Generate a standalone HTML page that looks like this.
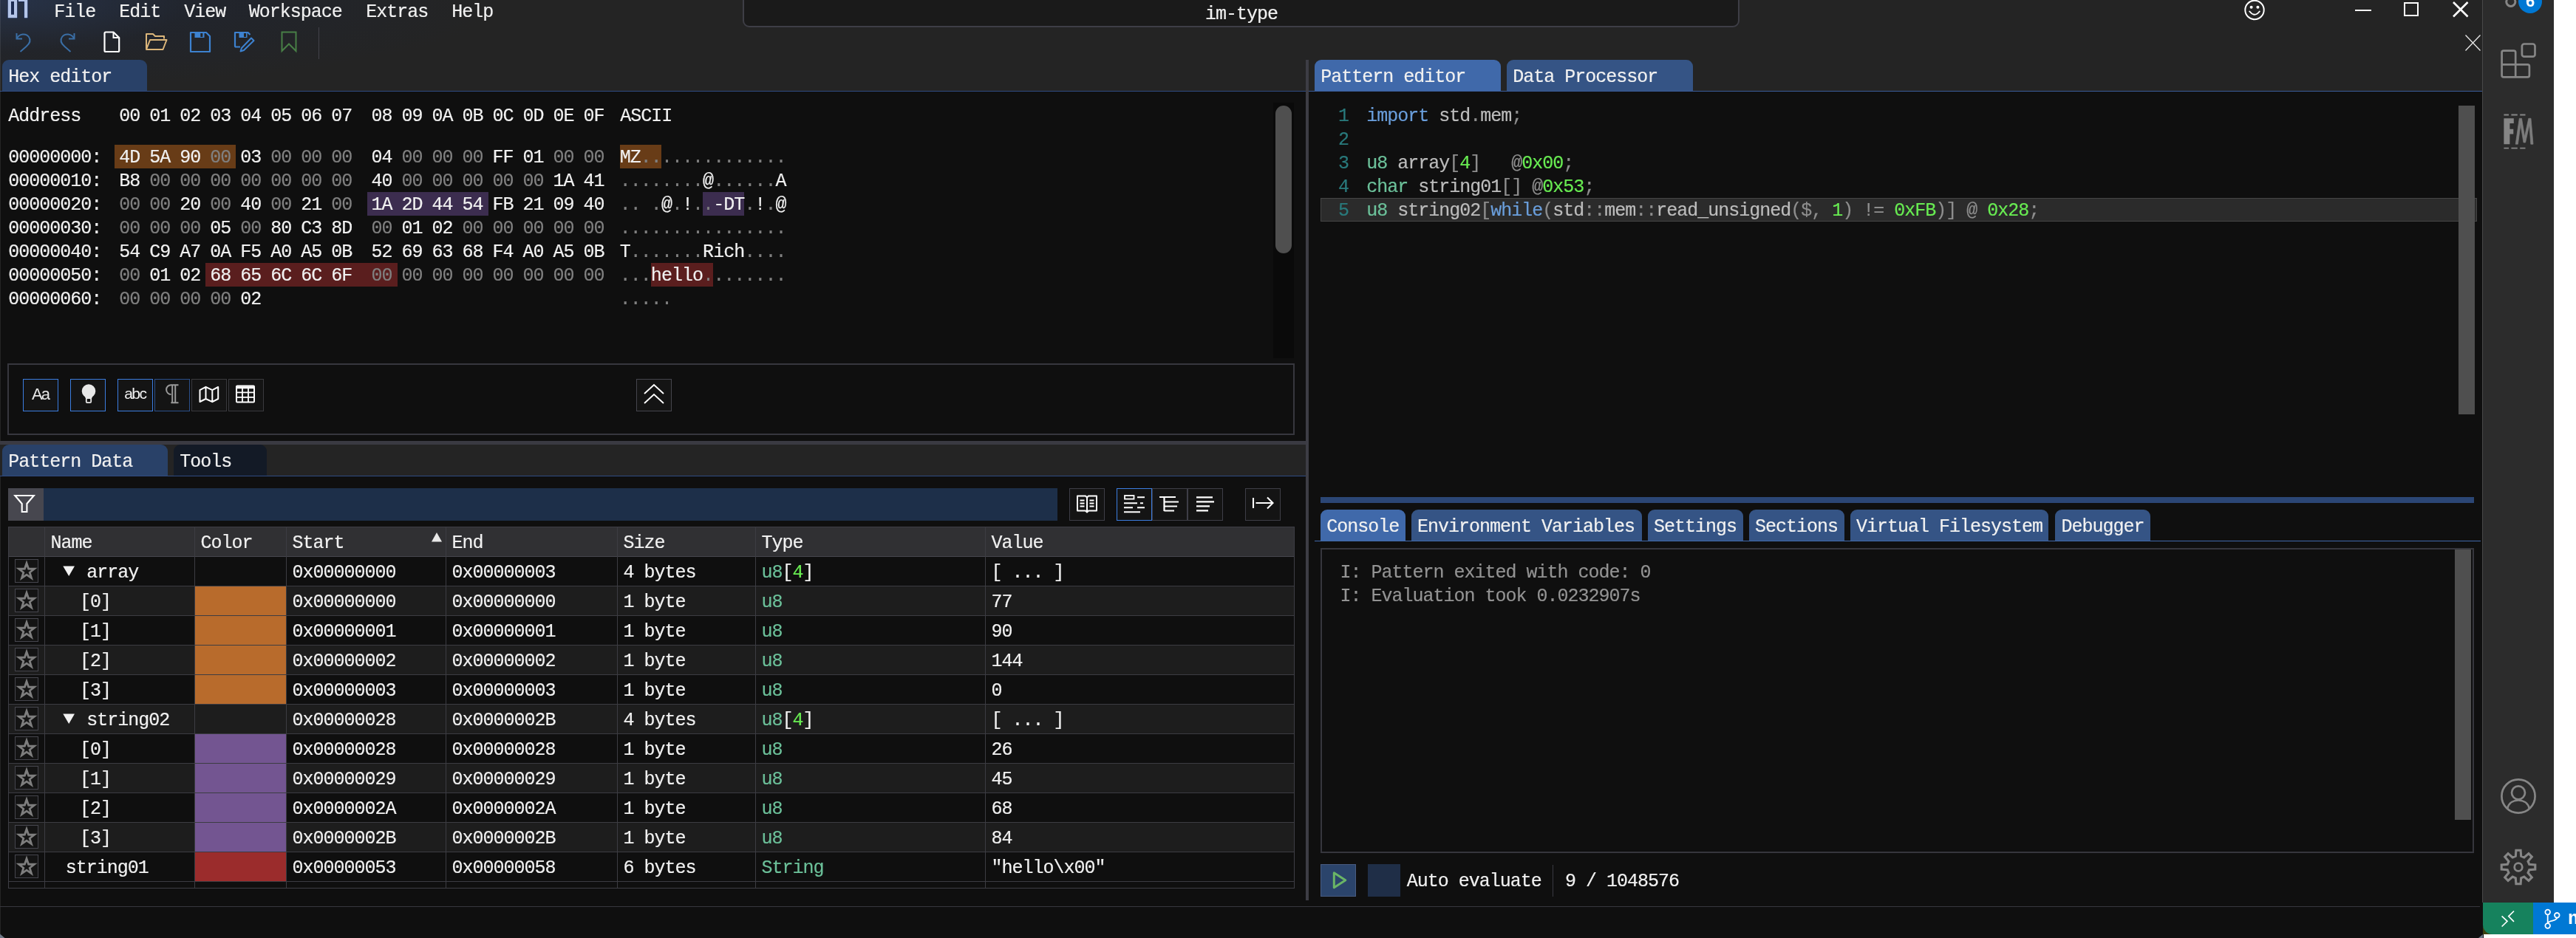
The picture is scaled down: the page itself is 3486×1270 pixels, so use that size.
<!DOCTYPE html>
<html><head><meta charset="utf-8"><title>im-type</title><style>
html,body{margin:0;padding:0;background:#0f0f0f;}
body{width:3486px;height:1270px;position:relative;overflow:hidden;font-family:"Liberation Mono",monospace;font-size:25.0px;letter-spacing:-1.004px;color:#f1f1f1;}
div,svg,span.t,span.s{position:absolute;}
#L{left:0;top:0;width:3486px;height:1270px;will-change:transform;}
span.t{white-space:pre;line-height:32px;height:32px;-webkit-text-stroke:0.18px currentColor;}
span.t span{-webkit-text-stroke:0.18px currentColor;}
span.s{white-space:pre;font-family:"Liberation Sans",sans-serif;letter-spacing:0;line-height:1.15;}
svg{overflow:visible;}
</style></head><body><div id="L">
<div style="left:0.00px;top:0.00px;width:3359.50px;height:1270.00px;background:#0f0f0f;"></div>
<div style="left:0.00px;top:0.00px;width:3359.50px;height:123.00px;background:#242424;"></div>
<div style="left:0.00px;top:0.00px;width:1000.00px;height:123.00px;background:radial-gradient(ellipse 260px 70px at 0 0, rgba(70,100,150,0.22), rgba(70,100,150,0) 100%),radial-gradient(ellipse 680px 120px at 0 0, rgba(22,40,80,0.34), rgba(22,40,80,0.14) 55%, rgba(36,36,36,0) 100%);"></div>
<div style="left:3.00px;top:81.00px;width:196.00px;height:42.00px;background:#294168;border-radius:9px 9px 0 0;"></div>
<div style="left:0.00px;top:123.10px;width:1767.00px;height:1.00px;background:#2f4b82;"></div>
<span class="t" style="left:11.30px;top:88.85px;">Hex editor</span>
<div style="left:1778.50px;top:81.40px;width:252.50px;height:41.60px;background:#4069aa;border-radius:9px 9px 0 0;"></div>
<div style="left:2038.70px;top:81.40px;width:252.50px;height:41.60px;background:#355485;border-radius:9px 9px 0 0;"></div>
<div style="left:1771.00px;top:123.00px;width:1588.50px;height:1.00px;background:#3a5c9a;"></div>
<span class="t" style="left:1787.30px;top:88.85px;">Pattern editor</span>
<span class="t" style="left:2047.30px;top:88.85px;">Data Processor</span>
<div style="left:1766.80px;top:81.00px;width:4.20px;height:1138.00px;background:#3d3d45;"></div>
<div style="left:0.00px;top:0.00px;width:1.00px;height:1270.00px;background:rgba(255,255,255,0.09);"></div>
<span class="t" style="left:73.30px;top:1.35px;">File</span>
<span class="t" style="left:161.30px;top:1.35px;">Edit</span>
<span class="t" style="left:249.30px;top:1.35px;">View</span>
<span class="t" style="left:336.80px;top:1.35px;">Workspace</span>
<span class="t" style="left:495.30px;top:1.35px;">Extras</span>
<span class="t" style="left:611.30px;top:1.35px;">Help</span>
<svg style="left:9.00px;top:0.00px;" width="30" height="26" viewBox="0 0 30 26"><path d="M1.7 0 H14.2 V24.2 H1.7 Z" fill="#1a2a50" stroke="#15254a" stroke-width="1.6"/><path d="M15.9 0 H28.3 V24.2 H23.9 V2.1 H15.9 Z" fill="none" stroke="#15254a" stroke-width="1.8"/><path d="M1.7 -1 H14.2 V24.2 H1.7 Z M6 2.1 V19.7 H10 V2.1 Z" fill="#b4c5e8" fill-rule="evenodd"/><path d="M15.9 -1 H28.3 V24.2 H23.9 V2.1 H15.9 Z" fill="#b4c5e8"/></svg>
<div style="left:1005.20px;top:-10.00px;width:1348.60px;height:46.60px;background:#1a1a1a;border:2px solid #3e3e46;border-radius:9px;box-sizing:border-box;"></div>
<span class="t" style="left:1631.10px;top:3.65px;">im-type</span>
<svg style="left:3036.00px;top:-1.00px;" width="30" height="30" viewBox="0 0 30 30"><circle cx="15" cy="14.5" r="12.7" fill="none" stroke="#fff" stroke-width="2"/><circle cx="10.6" cy="10.8" r="2" fill="#fff"/><circle cx="19.4" cy="10.8" r="2" fill="#fff"/><path d="M8.3 16.5 Q15 25 21.7 16.5" fill="none" stroke="#fff" stroke-width="2" stroke-linecap="round"/></svg>
<div style="left:3187.00px;top:13.00px;width:22.00px;height:2.20px;background:#fff;"></div>
<div style="left:3253.00px;top:2.80px;width:20.00px;height:19.70px;border:2.2px solid #fff;box-sizing:border-box;"></div>
<svg style="left:3318.00px;top:1.20px;" width="24" height="24" viewBox="0 0 24 24"><path d="M2 2 L21.5 21.5 M21.5 2 L2 21.5" stroke="#fff" stroke-width="2.6"/></svg>
<svg style="left:3335.00px;top:46.00px;" width="24" height="24" viewBox="0 0 24 24"><path d="M1.5 1.5 L21.5 22.5 M21.5 1.5 L1.5 22.5" stroke="#e8e8e8" stroke-width="1.3"/></svg>
<svg style="left:20.00px;top:43.00px;" width="24" height="30" viewBox="0 0 24 30"><path d="M2.5 2 V9.5 H10" fill="none" stroke="#3a6ea5" stroke-width="2"/><path d="M2.8 9.2 C6 2.5 15 1.5 19 7 C22.5 12 19 17 15.5 20 L7.5 27" fill="none" stroke="#3a6ea5" stroke-width="2"/></svg>
<svg style="left:79.00px;top:43.00px;" width="24" height="30" viewBox="0 0 24 30"><path d="M21.5 2 V9.5 H14" fill="none" stroke="#3a6ea5" stroke-width="2"/><path d="M21.2 9.2 C18 2.5 9 1.5 5 7 C1.5 12 5 17 8.5 20 L16.5 27" fill="none" stroke="#3a6ea5" stroke-width="2"/></svg>
<svg style="left:140.00px;top:42.00px;" width="24" height="30" viewBox="0 0 24 30"><path d="M3 1.5 H13.5 L21.2 9 V26.5 Q21.2 28 19.7 28 H3 Q1.5 28 1.5 26.5 V3 Q1.5 1.5 3 1.5 Z" fill="none" stroke="#fff" stroke-width="2.2" stroke-linejoin="round"/><path d="M13.5 1.5 V9 H21.2" fill="none" stroke="#fff" stroke-width="2"/></svg>
<svg style="left:196.00px;top:44.00px;" width="32" height="26" viewBox="0 0 32 26"><path d="M26 8.5 V5 H14 L11 2 H2 V22" fill="none" stroke="#dcb67a" stroke-width="2" stroke-linejoin="round"/><path d="M2 23 L7 10 H29.5 L24.5 23 Z" fill="none" stroke="#dcb67a" stroke-width="2" stroke-linejoin="round"/></svg>
<svg style="left:256.00px;top:42.00px;" width="30" height="30" viewBox="0 0 30 30"><path d="M2 2 H23 L28 7 V28 H2 Z" fill="none" stroke="#3d82d0" stroke-width="2.2" stroke-linejoin="round"/><rect x="7.5" y="2" width="13" height="7" fill="#3d82d0"/><rect x="15.3" y="3" width="3" height="5" fill="#242424"/></svg>
<svg style="left:316.00px;top:42.00px;" width="30" height="30" viewBox="0 0 30 30"><path d="M9 21.5 H3.5 Q2 21.5 2 20 V2 H19.5 L22.5 5" fill="none" stroke="#3d82d0" stroke-width="2.2" stroke-linejoin="round"/><rect x="7.5" y="2" width="11" height="7" fill="#3d82d0"/><rect x="14" y="3" width="3" height="5" fill="#242424"/><path d="M24 9.5 L27.5 13 L14 26 L9.5 27.5 L11 23 Z" fill="none" stroke="#3d82d0" stroke-width="2" stroke-linejoin="round"/></svg>
<svg style="left:380.00px;top:42.00px;" width="22" height="30" viewBox="0 0 22 30"><path d="M1.5 1.5 H20.5 V27 L11 17.5 L1.5 27 Z" fill="none" stroke="#487f46" stroke-width="2"/></svg>
<div style="left:430.80px;top:37.00px;width:1.50px;height:43.00px;background:#43434b;"></div>
<span class="t" style="left:11.30px;top:142.35px;">Address</span>
<span class="t" style="left:161.30px;top:142.35px;">00</span>
<span class="t" style="left:202.30px;top:142.35px;">01</span>
<span class="t" style="left:243.30px;top:142.35px;">02</span>
<span class="t" style="left:284.30px;top:142.35px;">03</span>
<span class="t" style="left:325.30px;top:142.35px;">04</span>
<span class="t" style="left:366.30px;top:142.35px;">05</span>
<span class="t" style="left:407.30px;top:142.35px;">06</span>
<span class="t" style="left:448.30px;top:142.35px;">07</span>
<span class="t" style="left:502.60px;top:142.35px;">08</span>
<span class="t" style="left:543.60px;top:142.35px;">09</span>
<span class="t" style="left:584.60px;top:142.35px;">0A</span>
<span class="t" style="left:625.60px;top:142.35px;">0B</span>
<span class="t" style="left:666.60px;top:142.35px;">0C</span>
<span class="t" style="left:707.60px;top:142.35px;">0D</span>
<span class="t" style="left:748.60px;top:142.35px;">0E</span>
<span class="t" style="left:789.60px;top:142.35px;">0F</span>
<span class="t" style="left:839.30px;top:142.35px;">ASCII</span>
<div style="left:155.00px;top:196.00px;width:164.00px;height:32.00px;background:#683c17;"></div>
<div style="left:838.80px;top:196.00px;width:56.20px;height:32.00px;background:#683c17;"></div>
<span class="t" style="left:11.30px;top:198.35px;">00000000:</span>
<span class="t" style="left:161.30px;top:198.35px;">4D</span>
<span class="t" style="left:202.30px;top:198.35px;">5A</span>
<span class="t" style="left:243.30px;top:198.35px;">90</span>
<span class="t" style="left:284.30px;top:198.35px;color:#808080;">00</span>
<span class="t" style="left:325.30px;top:198.35px;">03</span>
<span class="t" style="left:366.30px;top:198.35px;color:#808080;">00</span>
<span class="t" style="left:407.30px;top:198.35px;color:#808080;">00</span>
<span class="t" style="left:448.30px;top:198.35px;color:#808080;">00</span>
<span class="t" style="left:502.60px;top:198.35px;">04</span>
<span class="t" style="left:543.60px;top:198.35px;color:#808080;">00</span>
<span class="t" style="left:584.60px;top:198.35px;color:#808080;">00</span>
<span class="t" style="left:625.60px;top:198.35px;color:#808080;">00</span>
<span class="t" style="left:666.60px;top:198.35px;">FF</span>
<span class="t" style="left:707.60px;top:198.35px;">01</span>
<span class="t" style="left:748.60px;top:198.35px;color:#808080;">00</span>
<span class="t" style="left:789.60px;top:198.35px;color:#808080;">00</span>
<span class="t" style="left:838.70px;top:198.35px;">M</span>
<span class="t" style="left:852.75px;top:198.35px;">Z</span>
<span class="t" style="left:866.80px;top:198.35px;color:#808080;">.</span>
<span class="t" style="left:880.85px;top:198.35px;color:#808080;">.</span>
<span class="t" style="left:894.90px;top:198.35px;color:#808080;">.</span>
<span class="t" style="left:908.95px;top:198.35px;color:#808080;">.</span>
<span class="t" style="left:923.00px;top:198.35px;color:#808080;">.</span>
<span class="t" style="left:937.05px;top:198.35px;color:#808080;">.</span>
<span class="t" style="left:951.10px;top:198.35px;color:#808080;">.</span>
<span class="t" style="left:965.15px;top:198.35px;color:#808080;">.</span>
<span class="t" style="left:979.20px;top:198.35px;color:#808080;">.</span>
<span class="t" style="left:993.25px;top:198.35px;color:#808080;">.</span>
<span class="t" style="left:1007.30px;top:198.35px;color:#808080;">.</span>
<span class="t" style="left:1021.35px;top:198.35px;color:#808080;">.</span>
<span class="t" style="left:1035.40px;top:198.35px;color:#808080;">.</span>
<span class="t" style="left:1049.45px;top:198.35px;color:#808080;">.</span>
<span class="t" style="left:11.30px;top:230.35px;">00000010:</span>
<span class="t" style="left:161.30px;top:230.35px;">B8</span>
<span class="t" style="left:202.30px;top:230.35px;color:#808080;">00</span>
<span class="t" style="left:243.30px;top:230.35px;color:#808080;">00</span>
<span class="t" style="left:284.30px;top:230.35px;color:#808080;">00</span>
<span class="t" style="left:325.30px;top:230.35px;color:#808080;">00</span>
<span class="t" style="left:366.30px;top:230.35px;color:#808080;">00</span>
<span class="t" style="left:407.30px;top:230.35px;color:#808080;">00</span>
<span class="t" style="left:448.30px;top:230.35px;color:#808080;">00</span>
<span class="t" style="left:502.60px;top:230.35px;">40</span>
<span class="t" style="left:543.60px;top:230.35px;color:#808080;">00</span>
<span class="t" style="left:584.60px;top:230.35px;color:#808080;">00</span>
<span class="t" style="left:625.60px;top:230.35px;color:#808080;">00</span>
<span class="t" style="left:666.60px;top:230.35px;color:#808080;">00</span>
<span class="t" style="left:707.60px;top:230.35px;color:#808080;">00</span>
<span class="t" style="left:748.60px;top:230.35px;">1A</span>
<span class="t" style="left:789.60px;top:230.35px;">41</span>
<span class="t" style="left:838.70px;top:230.35px;color:#808080;">.</span>
<span class="t" style="left:852.75px;top:230.35px;color:#808080;">.</span>
<span class="t" style="left:866.80px;top:230.35px;color:#808080;">.</span>
<span class="t" style="left:880.85px;top:230.35px;color:#808080;">.</span>
<span class="t" style="left:894.90px;top:230.35px;color:#808080;">.</span>
<span class="t" style="left:908.95px;top:230.35px;color:#808080;">.</span>
<span class="t" style="left:923.00px;top:230.35px;color:#808080;">.</span>
<span class="t" style="left:937.05px;top:230.35px;color:#808080;">.</span>
<span class="t" style="left:951.10px;top:230.35px;">@</span>
<span class="t" style="left:965.15px;top:230.35px;color:#808080;">.</span>
<span class="t" style="left:979.20px;top:230.35px;color:#808080;">.</span>
<span class="t" style="left:993.25px;top:230.35px;color:#808080;">.</span>
<span class="t" style="left:1007.30px;top:230.35px;color:#808080;">.</span>
<span class="t" style="left:1021.35px;top:230.35px;color:#808080;">.</span>
<span class="t" style="left:1035.40px;top:230.35px;color:#808080;">.</span>
<span class="t" style="left:1049.45px;top:230.35px;">A</span>
<div style="left:496.50px;top:260.00px;width:164.00px;height:32.00px;background:#3c2d4f;"></div>
<div style="left:951.20px;top:260.00px;width:56.20px;height:32.00px;background:#3c2d4f;"></div>
<span class="t" style="left:11.30px;top:262.35px;">00000020:</span>
<span class="t" style="left:161.30px;top:262.35px;color:#808080;">00</span>
<span class="t" style="left:202.30px;top:262.35px;color:#808080;">00</span>
<span class="t" style="left:243.30px;top:262.35px;">20</span>
<span class="t" style="left:284.30px;top:262.35px;color:#808080;">00</span>
<span class="t" style="left:325.30px;top:262.35px;">40</span>
<span class="t" style="left:366.30px;top:262.35px;color:#808080;">00</span>
<span class="t" style="left:407.30px;top:262.35px;">21</span>
<span class="t" style="left:448.30px;top:262.35px;color:#808080;">00</span>
<span class="t" style="left:502.60px;top:262.35px;">1A</span>
<span class="t" style="left:543.60px;top:262.35px;">2D</span>
<span class="t" style="left:584.60px;top:262.35px;">44</span>
<span class="t" style="left:625.60px;top:262.35px;">54</span>
<span class="t" style="left:666.60px;top:262.35px;">FB</span>
<span class="t" style="left:707.60px;top:262.35px;">21</span>
<span class="t" style="left:748.60px;top:262.35px;">09</span>
<span class="t" style="left:789.60px;top:262.35px;">40</span>
<span class="t" style="left:838.70px;top:262.35px;color:#808080;">.</span>
<span class="t" style="left:852.75px;top:262.35px;color:#808080;">.</span>
<span class="t" style="left:880.85px;top:262.35px;color:#808080;">.</span>
<span class="t" style="left:894.90px;top:262.35px;">@</span>
<span class="t" style="left:908.95px;top:262.35px;color:#808080;">.</span>
<span class="t" style="left:923.00px;top:262.35px;">!</span>
<span class="t" style="left:937.05px;top:262.35px;color:#808080;">.</span>
<span class="t" style="left:951.10px;top:262.35px;color:#808080;">.</span>
<span class="t" style="left:965.15px;top:262.35px;">-</span>
<span class="t" style="left:979.20px;top:262.35px;">D</span>
<span class="t" style="left:993.25px;top:262.35px;">T</span>
<span class="t" style="left:1007.30px;top:262.35px;color:#808080;">.</span>
<span class="t" style="left:1021.35px;top:262.35px;">!</span>
<span class="t" style="left:1035.40px;top:262.35px;color:#808080;">.</span>
<span class="t" style="left:1049.45px;top:262.35px;">@</span>
<span class="t" style="left:11.30px;top:294.35px;">00000030:</span>
<span class="t" style="left:161.30px;top:294.35px;color:#808080;">00</span>
<span class="t" style="left:202.30px;top:294.35px;color:#808080;">00</span>
<span class="t" style="left:243.30px;top:294.35px;color:#808080;">00</span>
<span class="t" style="left:284.30px;top:294.35px;">05</span>
<span class="t" style="left:325.30px;top:294.35px;color:#808080;">00</span>
<span class="t" style="left:366.30px;top:294.35px;">80</span>
<span class="t" style="left:407.30px;top:294.35px;">C3</span>
<span class="t" style="left:448.30px;top:294.35px;">8D</span>
<span class="t" style="left:502.60px;top:294.35px;color:#808080;">00</span>
<span class="t" style="left:543.60px;top:294.35px;">01</span>
<span class="t" style="left:584.60px;top:294.35px;">02</span>
<span class="t" style="left:625.60px;top:294.35px;color:#808080;">00</span>
<span class="t" style="left:666.60px;top:294.35px;color:#808080;">00</span>
<span class="t" style="left:707.60px;top:294.35px;color:#808080;">00</span>
<span class="t" style="left:748.60px;top:294.35px;color:#808080;">00</span>
<span class="t" style="left:789.60px;top:294.35px;color:#808080;">00</span>
<span class="t" style="left:838.70px;top:294.35px;color:#808080;">.</span>
<span class="t" style="left:852.75px;top:294.35px;color:#808080;">.</span>
<span class="t" style="left:866.80px;top:294.35px;color:#808080;">.</span>
<span class="t" style="left:880.85px;top:294.35px;color:#808080;">.</span>
<span class="t" style="left:894.90px;top:294.35px;color:#808080;">.</span>
<span class="t" style="left:908.95px;top:294.35px;color:#808080;">.</span>
<span class="t" style="left:923.00px;top:294.35px;color:#808080;">.</span>
<span class="t" style="left:937.05px;top:294.35px;color:#808080;">.</span>
<span class="t" style="left:951.10px;top:294.35px;color:#808080;">.</span>
<span class="t" style="left:965.15px;top:294.35px;color:#808080;">.</span>
<span class="t" style="left:979.20px;top:294.35px;color:#808080;">.</span>
<span class="t" style="left:993.25px;top:294.35px;color:#808080;">.</span>
<span class="t" style="left:1007.30px;top:294.35px;color:#808080;">.</span>
<span class="t" style="left:1021.35px;top:294.35px;color:#808080;">.</span>
<span class="t" style="left:1035.40px;top:294.35px;color:#808080;">.</span>
<span class="t" style="left:1049.45px;top:294.35px;color:#808080;">.</span>
<span class="t" style="left:11.30px;top:326.35px;">00000040:</span>
<span class="t" style="left:161.30px;top:326.35px;">54</span>
<span class="t" style="left:202.30px;top:326.35px;">C9</span>
<span class="t" style="left:243.30px;top:326.35px;">A7</span>
<span class="t" style="left:284.30px;top:326.35px;">0A</span>
<span class="t" style="left:325.30px;top:326.35px;">F5</span>
<span class="t" style="left:366.30px;top:326.35px;">A0</span>
<span class="t" style="left:407.30px;top:326.35px;">A5</span>
<span class="t" style="left:448.30px;top:326.35px;">0B</span>
<span class="t" style="left:502.60px;top:326.35px;">52</span>
<span class="t" style="left:543.60px;top:326.35px;">69</span>
<span class="t" style="left:584.60px;top:326.35px;">63</span>
<span class="t" style="left:625.60px;top:326.35px;">68</span>
<span class="t" style="left:666.60px;top:326.35px;">F4</span>
<span class="t" style="left:707.60px;top:326.35px;">A0</span>
<span class="t" style="left:748.60px;top:326.35px;">A5</span>
<span class="t" style="left:789.60px;top:326.35px;">0B</span>
<span class="t" style="left:838.70px;top:326.35px;">T</span>
<span class="t" style="left:852.75px;top:326.35px;color:#808080;">.</span>
<span class="t" style="left:866.80px;top:326.35px;color:#808080;">.</span>
<span class="t" style="left:880.85px;top:326.35px;color:#808080;">.</span>
<span class="t" style="left:894.90px;top:326.35px;color:#808080;">.</span>
<span class="t" style="left:908.95px;top:326.35px;color:#808080;">.</span>
<span class="t" style="left:923.00px;top:326.35px;color:#808080;">.</span>
<span class="t" style="left:937.05px;top:326.35px;color:#808080;">.</span>
<span class="t" style="left:951.10px;top:326.35px;">R</span>
<span class="t" style="left:965.15px;top:326.35px;">i</span>
<span class="t" style="left:979.20px;top:326.35px;">c</span>
<span class="t" style="left:993.25px;top:326.35px;">h</span>
<span class="t" style="left:1007.30px;top:326.35px;color:#808080;">.</span>
<span class="t" style="left:1021.35px;top:326.35px;color:#808080;">.</span>
<span class="t" style="left:1035.40px;top:326.35px;color:#808080;">.</span>
<span class="t" style="left:1049.45px;top:326.35px;color:#808080;">.</span>
<div style="left:278.00px;top:356.00px;width:259.50px;height:32.00px;background:#5a1e1e;"></div>
<div style="left:880.95px;top:356.00px;width:84.30px;height:32.00px;background:#5a1e1e;"></div>
<span class="t" style="left:11.30px;top:358.35px;">00000050:</span>
<span class="t" style="left:161.30px;top:358.35px;color:#808080;">00</span>
<span class="t" style="left:202.30px;top:358.35px;">01</span>
<span class="t" style="left:243.30px;top:358.35px;">02</span>
<span class="t" style="left:284.30px;top:358.35px;">68</span>
<span class="t" style="left:325.30px;top:358.35px;">65</span>
<span class="t" style="left:366.30px;top:358.35px;">6C</span>
<span class="t" style="left:407.30px;top:358.35px;">6C</span>
<span class="t" style="left:448.30px;top:358.35px;">6F</span>
<span class="t" style="left:502.60px;top:358.35px;color:#808080;">00</span>
<span class="t" style="left:543.60px;top:358.35px;color:#808080;">00</span>
<span class="t" style="left:584.60px;top:358.35px;color:#808080;">00</span>
<span class="t" style="left:625.60px;top:358.35px;color:#808080;">00</span>
<span class="t" style="left:666.60px;top:358.35px;color:#808080;">00</span>
<span class="t" style="left:707.60px;top:358.35px;color:#808080;">00</span>
<span class="t" style="left:748.60px;top:358.35px;color:#808080;">00</span>
<span class="t" style="left:789.60px;top:358.35px;color:#808080;">00</span>
<span class="t" style="left:838.70px;top:358.35px;color:#808080;">.</span>
<span class="t" style="left:852.75px;top:358.35px;color:#808080;">.</span>
<span class="t" style="left:866.80px;top:358.35px;color:#808080;">.</span>
<span class="t" style="left:880.85px;top:358.35px;">h</span>
<span class="t" style="left:894.90px;top:358.35px;">e</span>
<span class="t" style="left:908.95px;top:358.35px;">l</span>
<span class="t" style="left:923.00px;top:358.35px;">l</span>
<span class="t" style="left:937.05px;top:358.35px;">o</span>
<span class="t" style="left:951.10px;top:358.35px;color:#808080;">.</span>
<span class="t" style="left:965.15px;top:358.35px;color:#808080;">.</span>
<span class="t" style="left:979.20px;top:358.35px;color:#808080;">.</span>
<span class="t" style="left:993.25px;top:358.35px;color:#808080;">.</span>
<span class="t" style="left:1007.30px;top:358.35px;color:#808080;">.</span>
<span class="t" style="left:1021.35px;top:358.35px;color:#808080;">.</span>
<span class="t" style="left:1035.40px;top:358.35px;color:#808080;">.</span>
<span class="t" style="left:1049.45px;top:358.35px;color:#808080;">.</span>
<span class="t" style="left:11.30px;top:390.35px;">00000060:</span>
<span class="t" style="left:161.30px;top:390.35px;color:#808080;">00</span>
<span class="t" style="left:202.30px;top:390.35px;color:#808080;">00</span>
<span class="t" style="left:243.30px;top:390.35px;color:#808080;">00</span>
<span class="t" style="left:284.30px;top:390.35px;color:#808080;">00</span>
<span class="t" style="left:325.30px;top:390.35px;">02</span>
<span class="t" style="left:838.70px;top:390.35px;color:#808080;">.</span>
<span class="t" style="left:852.75px;top:390.35px;color:#808080;">.</span>
<span class="t" style="left:866.80px;top:390.35px;color:#808080;">.</span>
<span class="t" style="left:880.85px;top:390.35px;color:#808080;">.</span>
<span class="t" style="left:894.90px;top:390.35px;color:#808080;">.</span>
<div style="left:1723.00px;top:139.00px;width:28.00px;height:346.00px;background:#0a0a0a;"></div>
<div style="left:1726.00px;top:143.00px;width:22.00px;height:200.00px;background:#4f4f4f;border-radius:11px;"></div>
<div style="left:10.00px;top:491.90px;width:1742.00px;height:97.60px;border:2.5px solid #37373e;box-sizing:border-box;"></div>
<div style="left:31.00px;top:513.00px;width:48.00px;height:44.00px;background:#141414;border:1.5px solid #3b7de0;box-sizing:border-box;"></div>
<div style="left:95.00px;top:513.00px;width:48.00px;height:44.00px;background:#141414;border:1.5px solid #3b7de0;box-sizing:border-box;"></div>
<div style="left:159.00px;top:513.00px;width:48.00px;height:44.00px;background:#141414;border:1.5px solid #3b7de0;box-sizing:border-box;"></div>
<div style="left:209.00px;top:513.00px;width:48.00px;height:44.00px;background:#141414;border:1.5px solid #2a4f8a;box-sizing:border-box;"></div>
<div style="left:259.00px;top:513.00px;width:48.00px;height:44.00px;background:#141414;border:1.5px solid #3a3a3e;box-sizing:border-box;"></div>
<div style="left:309.00px;top:513.00px;width:48.00px;height:44.00px;background:#141414;border:1.5px solid #3a3a3e;box-sizing:border-box;"></div>
<div style="left:861.00px;top:513.00px;width:48.00px;height:44.00px;background:#141414;border:1.5px solid #45454d;box-sizing:border-box;"></div>
<span class="s" style="left:43px;top:521.2px;font-size:22px;letter-spacing:-1.9px;color:#e6e6e6">Aa</span>
<svg style="left:108.10px;top:517.80px;" width="24" height="36" viewBox="0 0 24 36"><circle cx="12" cy="11.5" r="9.3" fill="#e8e8e8"/><path d="M6 17 L8.2 22 H15.8 L18 17 Z" fill="#e8e8e8"/><rect x="8.8" y="21" width="6.4" height="6.2" rx="1.5" fill="none" stroke="#e8e8e8" stroke-width="1.8"/></svg>
<span class="s" style="left:168.2px;top:521px;font-size:21px;letter-spacing:-1.5px;color:#f0f0f0">abc</span>
<svg style="left:221.50px;top:519.00px;" width="24" height="34" viewBox="0 0 24 34"><path d="M9.5 15 A6.4 6.4 0 1 1 9.5 2.2 H19.5" fill="none" stroke="#9a9a9a" stroke-width="2"/><path d="M11.2 2 V26 M15.2 2 V26 M9.3 26.2 H19.5" fill="none" stroke="#9a9a9a" stroke-width="2"/></svg>
<svg style="left:268.30px;top:520.20px;" width="30" height="30" viewBox="0 0 30 30"><path d="M2.5 8.2 L10.5 3.8 L19.3 8.2 L27.2 4 V20 L19.3 24.2 L10.5 20 L2.5 24 Z M10.5 3.8 V20 M19.3 8.2 V24.2" fill="none" stroke="#fff" stroke-width="2" stroke-linejoin="round"/></svg>
<svg style="left:317.80px;top:520.30px;" width="28" height="28" viewBox="0 0 28 28"><rect x="2" y="2.5" width="24" height="22" rx="1" fill="none" stroke="#fff" stroke-width="2"/><path d="M2 4.7 H26" stroke="#fff" stroke-width="3"/><path d="M2 11.3 H26 M2 17.8 H26 M10 5 V24.5 M18 5 V24.5" stroke="#fff" stroke-width="1.8"/></svg>
<svg style="left:869.00px;top:517.00px;" width="32" height="36" viewBox="0 0 32 36"><path d="M3 16 L16 4 L29 16 M3 29 L16 17 L29 29" fill="none" stroke="#fff" stroke-width="1.9"/></svg>
<div style="left:0.00px;top:597.00px;width:1767.00px;height:4.80px;background:#3a3a42;"></div>
<div style="left:0.00px;top:601.80px;width:1767.00px;height:41.80px;background:#242424;"></div>
<div style="left:3.00px;top:601.80px;width:224.00px;height:41.80px;background:#294168;border-radius:9px 9px 0 0;"></div>
<div style="left:235.00px;top:601.80px;width:126.00px;height:41.80px;background:#131a26;border-radius:9px 9px 0 0;"></div>
<div style="left:0.00px;top:643.50px;width:1767.00px;height:1.00px;background:#2f4b82;"></div>
<span class="t" style="left:11.30px;top:609.65px;">Pattern Data</span>
<span class="t" style="left:243.30px;top:609.65px;">Tools</span>
<div style="left:11.00px;top:661.00px;width:48.00px;height:44.00px;background:#47474f;"></div>
<svg style="left:19.00px;top:668.00px;" width="32" height="30" viewBox="0 0 32 30"><path d="M1.3 3 H26.8 L17.4 14 V25 H10.7 V14 Z" fill="none" stroke="#fff" stroke-width="2.1" stroke-linejoin="miter"/></svg>
<div style="left:59.00px;top:661.00px;width:1372.00px;height:44.00px;background:#1d2f49;"></div>
<div style="left:1447.00px;top:661.00px;width:48.00px;height:44.00px;background:#141414;border:1.5px solid #3e3e47;box-sizing:border-box;"></div>
<div style="left:1511.00px;top:661.00px;width:48.00px;height:44.00px;background:#141414;border:1.5px solid #3b7de0;box-sizing:border-box;"></div>
<div style="left:1559.00px;top:661.00px;width:48.00px;height:44.00px;background:#141414;border:1.5px solid #3e3e47;box-sizing:border-box;"></div>
<div style="left:1607.00px;top:661.00px;width:48.00px;height:44.00px;background:#141414;border:1.5px solid #3e3e47;box-sizing:border-box;"></div>
<div style="left:1685.00px;top:661.00px;width:48.00px;height:44.00px;background:#141414;border:1.5px solid #3e3e47;box-sizing:border-box;"></div>
<div style="left:1511.00px;top:661.00px;width:48.00px;height:44.00px;background:#141414;border:1.5px solid #3b7de0;box-sizing:border-box;"></div>
<svg style="left:1456.00px;top:669.00px;" width="30" height="28" viewBox="0 0 30 28"><path d="M2 2.5 H13 L15 4.5 L17 2.5 H28 V22.5 H17 L15 24.5 L13 22.5 H2 Z M15 4.5 V23" fill="none" stroke="#fff" stroke-width="2" stroke-linejoin="round"/><path d="M5.5 8.5 H11.5 M5.5 12.5 H11.5 M5.5 16.5 H11.5 M18.5 8.5 H24.5 M18.5 12.5 H24.5 M18.5 16.5 H24.5" stroke="#fff" stroke-width="2"/></svg>
<svg style="left:1520.00px;top:668.00px;" width="30" height="30" viewBox="0 0 30 30"><rect x="2" y="3" width="12.5" height="4.6" fill="none" stroke="#fff" stroke-width="1.8"/><path d="M19 5.3 H29 M1 13.3 H19 M23 13.3 H27 M1 19.3 H13 M19 19.3 H29 M1 25.3 H23" stroke="#fff" stroke-width="2"/></svg>
<svg style="left:1568.00px;top:668.00px;" width="30" height="30" viewBox="0 0 30 30"><path d="M1 5 H23 M7.5 5 V24 M7.5 11.5 H27 M7.5 17.5 H25 M7.5 23.5 H21" fill="none" stroke="#fff" stroke-width="2.2"/></svg>
<svg style="left:1616.00px;top:668.00px;" width="30" height="30" viewBox="0 0 30 30"><path d="M3 5.3 H25 M3 11.3 H27 M3 17.3 H21 M3 23.3 H19" stroke="#fff" stroke-width="2.2"/></svg>
<svg style="left:1693.00px;top:666.00px;" width="32" height="30" viewBox="0 0 32 30"><path d="M3 8 V22 M6.5 15 H29 M22 7.5 L29.5 15 L22 22.5" fill="none" stroke="#fff" stroke-width="2.1"/></svg>
<div style="left:11.00px;top:713.20px;width:1740.00px;height:40.20px;background:#303033;"></div>
<div style="left:11.00px;top:793.00px;width:1740.00px;height:40.00px;background:#1d1d1d;"></div>
<div style="left:11.00px;top:873.00px;width:1740.00px;height:40.00px;background:#1d1d1d;"></div>
<div style="left:11.00px;top:953.00px;width:1740.00px;height:40.00px;background:#1d1d1d;"></div>
<div style="left:11.00px;top:1033.00px;width:1740.00px;height:40.00px;background:#1d1d1d;"></div>
<div style="left:11.00px;top:1113.00px;width:1740.00px;height:40.00px;background:#1d1d1d;"></div>
<div style="left:264.00px;top:794.00px;width:123.00px;height:39.00px;background:#b86b2c;"></div>
<div style="left:264.00px;top:834.00px;width:123.00px;height:39.00px;background:#b86b2c;"></div>
<div style="left:264.00px;top:874.00px;width:123.00px;height:39.00px;background:#b86b2c;"></div>
<div style="left:264.00px;top:914.00px;width:123.00px;height:39.00px;background:#b86b2c;"></div>
<div style="left:264.00px;top:994.00px;width:123.00px;height:39.00px;background:#735591;"></div>
<div style="left:264.00px;top:1034.00px;width:123.00px;height:39.00px;background:#735591;"></div>
<div style="left:264.00px;top:1074.00px;width:123.00px;height:39.00px;background:#735591;"></div>
<div style="left:264.00px;top:1114.00px;width:123.00px;height:39.00px;background:#735591;"></div>
<div style="left:264.00px;top:1154.00px;width:123.00px;height:39.00px;background:#9b2c2c;"></div>
<div style="left:11.00px;top:753.00px;width:1740.00px;height:1.25px;background:#46464e;"></div>
<div style="left:11.00px;top:793.00px;width:1740.00px;height:1.25px;background:#3c3c42;"></div>
<div style="left:11.00px;top:833.00px;width:1740.00px;height:1.25px;background:#3c3c42;"></div>
<div style="left:11.00px;top:873.00px;width:1740.00px;height:1.25px;background:#3c3c42;"></div>
<div style="left:11.00px;top:913.00px;width:1740.00px;height:1.25px;background:#3c3c42;"></div>
<div style="left:11.00px;top:953.00px;width:1740.00px;height:1.25px;background:#3c3c42;"></div>
<div style="left:11.00px;top:993.00px;width:1740.00px;height:1.25px;background:#3c3c42;"></div>
<div style="left:11.00px;top:1033.00px;width:1740.00px;height:1.25px;background:#3c3c42;"></div>
<div style="left:11.00px;top:1073.00px;width:1740.00px;height:1.25px;background:#3c3c42;"></div>
<div style="left:11.00px;top:1113.00px;width:1740.00px;height:1.25px;background:#3c3c42;"></div>
<div style="left:11.00px;top:1153.00px;width:1740.00px;height:1.25px;background:#3c3c42;"></div>
<div style="left:11.00px;top:1193.00px;width:1740.00px;height:1.25px;background:#3c3c42;"></div>
<div style="left:60.00px;top:713.20px;width:1.20px;height:489.30px;background:#3c3c42;"></div>
<div style="left:263.00px;top:713.20px;width:1.20px;height:489.30px;background:#3c3c42;"></div>
<div style="left:387.00px;top:713.20px;width:1.20px;height:489.30px;background:#3c3c42;"></div>
<div style="left:603.00px;top:713.20px;width:1.20px;height:489.30px;background:#3c3c42;"></div>
<div style="left:835.00px;top:713.20px;width:1.20px;height:489.30px;background:#3c3c42;"></div>
<div style="left:1022.00px;top:713.20px;width:1.20px;height:489.30px;background:#3c3c42;"></div>
<div style="left:1333.00px;top:713.20px;width:1.20px;height:489.30px;background:#3c3c42;"></div>
<div style="left:10.80px;top:712.70px;width:1740.80px;height:490.60px;border:1.5px solid #3e3e45;box-sizing:border-box;"></div>
<span class="t" style="left:68.60px;top:720.25px;">Name</span>
<span class="t" style="left:271.60px;top:720.25px;">Color</span>
<span class="t" style="left:395.60px;top:720.25px;">Start</span>
<span class="t" style="left:611.60px;top:720.25px;">End</span>
<span class="t" style="left:843.60px;top:720.25px;">Size</span>
<span class="t" style="left:1030.60px;top:720.25px;">Type</span>
<span class="t" style="left:1341.60px;top:720.25px;">Value</span>
<svg style="left:583.00px;top:720.00px;" width="16" height="15" viewBox="0 0 16 15"><path d="M8 1 L15 13.5 H1 Z" fill="#e8e8e8"/></svg>
<div style="left:20.00px;top:757.00px;width:32.00px;height:32.00px;background:#141414;border:1px solid #46464e;box-sizing:border-box;"></div>
<svg style="left:22.00px;top:757.50px;" width="28" height="28" viewBox="0 0 28 28"><path d="M14.00 0.30 L17.60 10.65 L28.55 10.87 L19.82 17.49 L22.99 27.98 L14.00 21.72 L5.01 27.98 L8.18 17.49 L-0.55 10.87 L10.40 10.65 Z" fill="#7e7e7e"/><path d="M14.00 9.00 L15.60 13.60 L20.47 13.70 L16.59 16.64 L18.00 21.30 L14.00 18.52 L10.00 21.30 L11.41 16.64 L7.53 13.70 L12.40 13.60 Z" fill="#141414"/></svg>
<svg style="left:85.00px;top:765.60px;" width="17" height="15" viewBox="0 0 17 15"><path d="M0.3 0.5 H16 L8.2 14 Z" fill="#f2f2f2"/></svg>
<span class="t" style="left:117.30px;top:759.85px;">array</span>
<span class="t" style="left:395.60px;top:759.85px;">0x00000000</span>
<span class="t" style="left:611.60px;top:759.85px;">0x00000003</span>
<span class="t" style="left:843.60px;top:759.85px;">4 bytes</span>
<span class="t" style="left:1030.60px;top:759.85px;"><span style="color:#6cc19a">u8</span>[<span style="color:#68ec52">4</span>]</span>
<span class="t" style="left:1341.60px;top:759.85px;">[ ... ]</span>
<div style="left:20.00px;top:797.00px;width:32.00px;height:32.00px;background:#141414;border:1px solid #46464e;box-sizing:border-box;"></div>
<svg style="left:22.00px;top:797.50px;" width="28" height="28" viewBox="0 0 28 28"><path d="M14.00 0.30 L17.60 10.65 L28.55 10.87 L19.82 17.49 L22.99 27.98 L14.00 21.72 L5.01 27.98 L8.18 17.49 L-0.55 10.87 L10.40 10.65 Z" fill="#7e7e7e"/><path d="M14.00 9.00 L15.60 13.60 L20.47 13.70 L16.59 16.64 L18.00 21.30 L14.00 18.52 L10.00 21.30 L11.41 16.64 L7.53 13.70 L12.40 13.60 Z" fill="#141414"/></svg>
<span class="t" style="left:108.10px;top:799.85px;">[0]</span>
<span class="t" style="left:395.60px;top:799.85px;">0x00000000</span>
<span class="t" style="left:611.60px;top:799.85px;">0x00000000</span>
<span class="t" style="left:843.60px;top:799.85px;">1 byte</span>
<span class="t" style="left:1030.60px;top:799.85px;color:#6cc19a;">u8</span>
<span class="t" style="left:1341.60px;top:799.85px;">77</span>
<div style="left:20.00px;top:837.00px;width:32.00px;height:32.00px;background:#141414;border:1px solid #46464e;box-sizing:border-box;"></div>
<svg style="left:22.00px;top:837.50px;" width="28" height="28" viewBox="0 0 28 28"><path d="M14.00 0.30 L17.60 10.65 L28.55 10.87 L19.82 17.49 L22.99 27.98 L14.00 21.72 L5.01 27.98 L8.18 17.49 L-0.55 10.87 L10.40 10.65 Z" fill="#7e7e7e"/><path d="M14.00 9.00 L15.60 13.60 L20.47 13.70 L16.59 16.64 L18.00 21.30 L14.00 18.52 L10.00 21.30 L11.41 16.64 L7.53 13.70 L12.40 13.60 Z" fill="#141414"/></svg>
<span class="t" style="left:108.10px;top:839.85px;">[1]</span>
<span class="t" style="left:395.60px;top:839.85px;">0x00000001</span>
<span class="t" style="left:611.60px;top:839.85px;">0x00000001</span>
<span class="t" style="left:843.60px;top:839.85px;">1 byte</span>
<span class="t" style="left:1030.60px;top:839.85px;color:#6cc19a;">u8</span>
<span class="t" style="left:1341.60px;top:839.85px;">90</span>
<div style="left:20.00px;top:877.00px;width:32.00px;height:32.00px;background:#141414;border:1px solid #46464e;box-sizing:border-box;"></div>
<svg style="left:22.00px;top:877.50px;" width="28" height="28" viewBox="0 0 28 28"><path d="M14.00 0.30 L17.60 10.65 L28.55 10.87 L19.82 17.49 L22.99 27.98 L14.00 21.72 L5.01 27.98 L8.18 17.49 L-0.55 10.87 L10.40 10.65 Z" fill="#7e7e7e"/><path d="M14.00 9.00 L15.60 13.60 L20.47 13.70 L16.59 16.64 L18.00 21.30 L14.00 18.52 L10.00 21.30 L11.41 16.64 L7.53 13.70 L12.40 13.60 Z" fill="#141414"/></svg>
<span class="t" style="left:108.10px;top:879.85px;">[2]</span>
<span class="t" style="left:395.60px;top:879.85px;">0x00000002</span>
<span class="t" style="left:611.60px;top:879.85px;">0x00000002</span>
<span class="t" style="left:843.60px;top:879.85px;">1 byte</span>
<span class="t" style="left:1030.60px;top:879.85px;color:#6cc19a;">u8</span>
<span class="t" style="left:1341.60px;top:879.85px;">144</span>
<div style="left:20.00px;top:917.00px;width:32.00px;height:32.00px;background:#141414;border:1px solid #46464e;box-sizing:border-box;"></div>
<svg style="left:22.00px;top:917.50px;" width="28" height="28" viewBox="0 0 28 28"><path d="M14.00 0.30 L17.60 10.65 L28.55 10.87 L19.82 17.49 L22.99 27.98 L14.00 21.72 L5.01 27.98 L8.18 17.49 L-0.55 10.87 L10.40 10.65 Z" fill="#7e7e7e"/><path d="M14.00 9.00 L15.60 13.60 L20.47 13.70 L16.59 16.64 L18.00 21.30 L14.00 18.52 L10.00 21.30 L11.41 16.64 L7.53 13.70 L12.40 13.60 Z" fill="#141414"/></svg>
<span class="t" style="left:108.10px;top:919.85px;">[3]</span>
<span class="t" style="left:395.60px;top:919.85px;">0x00000003</span>
<span class="t" style="left:611.60px;top:919.85px;">0x00000003</span>
<span class="t" style="left:843.60px;top:919.85px;">1 byte</span>
<span class="t" style="left:1030.60px;top:919.85px;color:#6cc19a;">u8</span>
<span class="t" style="left:1341.60px;top:919.85px;">0</span>
<div style="left:20.00px;top:957.00px;width:32.00px;height:32.00px;background:#141414;border:1px solid #46464e;box-sizing:border-box;"></div>
<svg style="left:22.00px;top:957.50px;" width="28" height="28" viewBox="0 0 28 28"><path d="M14.00 0.30 L17.60 10.65 L28.55 10.87 L19.82 17.49 L22.99 27.98 L14.00 21.72 L5.01 27.98 L8.18 17.49 L-0.55 10.87 L10.40 10.65 Z" fill="#7e7e7e"/><path d="M14.00 9.00 L15.60 13.60 L20.47 13.70 L16.59 16.64 L18.00 21.30 L14.00 18.52 L10.00 21.30 L11.41 16.64 L7.53 13.70 L12.40 13.60 Z" fill="#141414"/></svg>
<svg style="left:85.00px;top:965.60px;" width="17" height="15" viewBox="0 0 17 15"><path d="M0.3 0.5 H16 L8.2 14 Z" fill="#f2f2f2"/></svg>
<span class="t" style="left:117.30px;top:959.85px;">string02</span>
<span class="t" style="left:395.60px;top:959.85px;">0x00000028</span>
<span class="t" style="left:611.60px;top:959.85px;">0x0000002B</span>
<span class="t" style="left:843.60px;top:959.85px;">4 bytes</span>
<span class="t" style="left:1030.60px;top:959.85px;"><span style="color:#6cc19a">u8</span>[<span style="color:#68ec52">4</span>]</span>
<span class="t" style="left:1341.60px;top:959.85px;">[ ... ]</span>
<div style="left:20.00px;top:997.00px;width:32.00px;height:32.00px;background:#141414;border:1px solid #46464e;box-sizing:border-box;"></div>
<svg style="left:22.00px;top:997.50px;" width="28" height="28" viewBox="0 0 28 28"><path d="M14.00 0.30 L17.60 10.65 L28.55 10.87 L19.82 17.49 L22.99 27.98 L14.00 21.72 L5.01 27.98 L8.18 17.49 L-0.55 10.87 L10.40 10.65 Z" fill="#7e7e7e"/><path d="M14.00 9.00 L15.60 13.60 L20.47 13.70 L16.59 16.64 L18.00 21.30 L14.00 18.52 L10.00 21.30 L11.41 16.64 L7.53 13.70 L12.40 13.60 Z" fill="#141414"/></svg>
<span class="t" style="left:108.10px;top:999.85px;">[0]</span>
<span class="t" style="left:395.60px;top:999.85px;">0x00000028</span>
<span class="t" style="left:611.60px;top:999.85px;">0x00000028</span>
<span class="t" style="left:843.60px;top:999.85px;">1 byte</span>
<span class="t" style="left:1030.60px;top:999.85px;color:#6cc19a;">u8</span>
<span class="t" style="left:1341.60px;top:999.85px;">26</span>
<div style="left:20.00px;top:1037.00px;width:32.00px;height:32.00px;background:#141414;border:1px solid #46464e;box-sizing:border-box;"></div>
<svg style="left:22.00px;top:1037.50px;" width="28" height="28" viewBox="0 0 28 28"><path d="M14.00 0.30 L17.60 10.65 L28.55 10.87 L19.82 17.49 L22.99 27.98 L14.00 21.72 L5.01 27.98 L8.18 17.49 L-0.55 10.87 L10.40 10.65 Z" fill="#7e7e7e"/><path d="M14.00 9.00 L15.60 13.60 L20.47 13.70 L16.59 16.64 L18.00 21.30 L14.00 18.52 L10.00 21.30 L11.41 16.64 L7.53 13.70 L12.40 13.60 Z" fill="#141414"/></svg>
<span class="t" style="left:108.10px;top:1039.85px;">[1]</span>
<span class="t" style="left:395.60px;top:1039.85px;">0x00000029</span>
<span class="t" style="left:611.60px;top:1039.85px;">0x00000029</span>
<span class="t" style="left:843.60px;top:1039.85px;">1 byte</span>
<span class="t" style="left:1030.60px;top:1039.85px;color:#6cc19a;">u8</span>
<span class="t" style="left:1341.60px;top:1039.85px;">45</span>
<div style="left:20.00px;top:1077.00px;width:32.00px;height:32.00px;background:#141414;border:1px solid #46464e;box-sizing:border-box;"></div>
<svg style="left:22.00px;top:1077.50px;" width="28" height="28" viewBox="0 0 28 28"><path d="M14.00 0.30 L17.60 10.65 L28.55 10.87 L19.82 17.49 L22.99 27.98 L14.00 21.72 L5.01 27.98 L8.18 17.49 L-0.55 10.87 L10.40 10.65 Z" fill="#7e7e7e"/><path d="M14.00 9.00 L15.60 13.60 L20.47 13.70 L16.59 16.64 L18.00 21.30 L14.00 18.52 L10.00 21.30 L11.41 16.64 L7.53 13.70 L12.40 13.60 Z" fill="#141414"/></svg>
<span class="t" style="left:108.10px;top:1079.85px;">[2]</span>
<span class="t" style="left:395.60px;top:1079.85px;">0x0000002A</span>
<span class="t" style="left:611.60px;top:1079.85px;">0x0000002A</span>
<span class="t" style="left:843.60px;top:1079.85px;">1 byte</span>
<span class="t" style="left:1030.60px;top:1079.85px;color:#6cc19a;">u8</span>
<span class="t" style="left:1341.60px;top:1079.85px;">68</span>
<div style="left:20.00px;top:1117.00px;width:32.00px;height:32.00px;background:#141414;border:1px solid #46464e;box-sizing:border-box;"></div>
<svg style="left:22.00px;top:1117.50px;" width="28" height="28" viewBox="0 0 28 28"><path d="M14.00 0.30 L17.60 10.65 L28.55 10.87 L19.82 17.49 L22.99 27.98 L14.00 21.72 L5.01 27.98 L8.18 17.49 L-0.55 10.87 L10.40 10.65 Z" fill="#7e7e7e"/><path d="M14.00 9.00 L15.60 13.60 L20.47 13.70 L16.59 16.64 L18.00 21.30 L14.00 18.52 L10.00 21.30 L11.41 16.64 L7.53 13.70 L12.40 13.60 Z" fill="#141414"/></svg>
<span class="t" style="left:108.10px;top:1119.85px;">[3]</span>
<span class="t" style="left:395.60px;top:1119.85px;">0x0000002B</span>
<span class="t" style="left:611.60px;top:1119.85px;">0x0000002B</span>
<span class="t" style="left:843.60px;top:1119.85px;">1 byte</span>
<span class="t" style="left:1030.60px;top:1119.85px;color:#6cc19a;">u8</span>
<span class="t" style="left:1341.60px;top:1119.85px;">84</span>
<div style="left:20.00px;top:1157.00px;width:32.00px;height:32.00px;background:#141414;border:1px solid #46464e;box-sizing:border-box;"></div>
<svg style="left:22.00px;top:1157.50px;" width="28" height="28" viewBox="0 0 28 28"><path d="M14.00 0.30 L17.60 10.65 L28.55 10.87 L19.82 17.49 L22.99 27.98 L14.00 21.72 L5.01 27.98 L8.18 17.49 L-0.55 10.87 L10.40 10.65 Z" fill="#7e7e7e"/><path d="M14.00 9.00 L15.60 13.60 L20.47 13.70 L16.59 16.64 L18.00 21.30 L14.00 18.52 L10.00 21.30 L11.41 16.64 L7.53 13.70 L12.40 13.60 Z" fill="#141414"/></svg>
<span class="t" style="left:88.80px;top:1159.85px;">string01</span>
<span class="t" style="left:395.60px;top:1159.85px;">0x00000053</span>
<span class="t" style="left:611.60px;top:1159.85px;">0x00000058</span>
<span class="t" style="left:843.60px;top:1159.85px;">6 bytes</span>
<span class="t" style="left:1030.60px;top:1159.85px;color:#6cc19a;">String</span>
<span class="t" style="left:1341.60px;top:1159.85px;">"hello\x00"</span>
<div style="left:0.00px;top:1226.60px;width:3359.50px;height:1.40px;background:#37373e;"></div>
<div style="left:1787.00px;top:268.20px;width:1564.50px;height:31.60px;background:#2b2b2b;border:1.2px solid #454545;box-sizing:border-box;"></div>
<span class="t" style="left:1810.90px;top:142.35px;color:#297a7c;">1</span>
<span class="t" style="left:1849.30px;top:142.35px;"><span style="color:#6a9edb">import</span><span style="color:#bcbcbc"> std</span><span style="color:#8e8e8e">.</span><span style="color:#bcbcbc">mem</span><span style="color:#8e8e8e">;</span></span>
<span class="t" style="left:1810.90px;top:174.35px;color:#297a7c;">2</span>
<span class="t" style="left:1810.90px;top:206.35px;color:#297a7c;">3</span>
<span class="t" style="left:1849.30px;top:206.35px;"><span style="color:#6cc19a">u8</span><span style="color:#bcbcbc"> array</span><span style="color:#8e8e8e">[</span><span style="color:#68ec52">4</span><span style="color:#8e8e8e">]   @</span><span style="color:#68ec52">0x00</span><span style="color:#8e8e8e">;</span></span>
<span class="t" style="left:1810.90px;top:238.35px;color:#297a7c;">4</span>
<span class="t" style="left:1849.30px;top:238.35px;"><span style="color:#6cc19a">char</span><span style="color:#bcbcbc"> string01</span><span style="color:#8e8e8e">[] @</span><span style="color:#68ec52">0x53</span><span style="color:#8e8e8e">;</span></span>
<span class="t" style="left:1810.90px;top:270.35px;color:#297a7c;">5</span>
<span class="t" style="left:1849.30px;top:270.35px;"><span style="color:#6cc19a">u8</span><span style="color:#bcbcbc"> string02</span><span style="color:#8e8e8e">[</span><span style="color:#6a9edb">while</span><span style="color:#8e8e8e">(</span><span style="color:#bcbcbc">std</span><span style="color:#8e8e8e">::</span><span style="color:#bcbcbc">mem</span><span style="color:#8e8e8e">::</span><span style="color:#bcbcbc">read_unsigned</span><span style="color:#8e8e8e">($, </span><span style="color:#68ec52">1</span><span style="color:#8e8e8e">) != </span><span style="color:#68ec52">0xFB</span><span style="color:#8e8e8e">)] @ </span><span style="color:#68ec52">0x28</span><span style="color:#8e8e8e">;</span></span>
<div style="left:3327.30px;top:143.00px;width:21.80px;height:417.80px;background:#4f4f4f;"></div>
<div style="left:1787.00px;top:673.30px;width:1561.00px;height:7.60px;background:#2b4675;"></div>
<div style="left:1787.00px;top:689.70px;width:114.70px;height:42.50px;background:#4069aa;border-radius:9px 9px 0 0;"></div>
<span class="t" style="left:1795.30px;top:698.35px;">Console</span>
<div style="left:1909.80px;top:689.70px;width:312.20px;height:42.50px;background:#355485;border-radius:9px 9px 0 0;"></div>
<span class="t" style="left:1918.10px;top:698.35px;">Environment Variables</span>
<div style="left:2229.70px;top:689.70px;width:129.30px;height:42.50px;background:#355485;border-radius:9px 9px 0 0;"></div>
<span class="t" style="left:2238.00px;top:698.35px;">Settings</span>
<div style="left:2366.80px;top:689.70px;width:129.20px;height:42.50px;background:#355485;border-radius:9px 9px 0 0;"></div>
<span class="t" style="left:2375.10px;top:698.35px;">Sections</span>
<div style="left:2503.80px;top:689.70px;width:268.70px;height:42.50px;background:#355485;border-radius:9px 9px 0 0;"></div>
<span class="t" style="left:2512.10px;top:698.35px;">Virtual Filesystem</span>
<div style="left:2781.30px;top:689.70px;width:128.60px;height:42.50px;background:#355485;border-radius:9px 9px 0 0;"></div>
<span class="t" style="left:2789.60px;top:698.35px;">Debugger</span>
<div style="left:1778.50px;top:731.80px;width:1578.00px;height:1.50px;background:#4069aa;"></div>
<div style="left:1787.00px;top:741.50px;width:1561.00px;height:413.00px;border:2px solid #36363d;box-sizing:border-box;"></div>
<span class="t" style="left:1813.60px;top:759.85px;color:#939393;">I: Pattern exited with code: 0</span>
<span class="t" style="left:1813.60px;top:791.85px;color:#939393;">I: Evaluation took 0.0232907s</span>
<div style="left:3322.00px;top:744.00px;width:22.00px;height:366.00px;background:#4f4f4f;"></div>
<div style="left:1787.00px;top:1170.20px;width:48.00px;height:43.60px;background:#2b446b;border:1px solid #485c82;box-sizing:border-box;"></div>
<svg style="left:1801.00px;top:1178.00px;" width="24" height="28" viewBox="0 0 24 28"><path d="M4.3 3.8 L19.8 13.8 L4.3 23.8 Z" fill="none" stroke="#6ab566" stroke-width="3" stroke-linejoin="round"/></svg>
<div style="left:1850.70px;top:1170.20px;width:44.30px;height:43.60px;background:#1f2e47;"></div>
<span class="t" style="left:1903.70px;top:1177.85px;">Auto evaluate</span>
<div style="left:2101.00px;top:1170.50px;width:1.30px;height:43.50px;background:#3a3a42;"></div>
<span class="t" style="left:2118.00px;top:1177.85px;">9 / 1048576</span>
<div style="left:3359.00px;top:0.00px;width:1.60px;height:1222.00px;background:#484848;"></div>
<div style="left:3360.40px;top:0.00px;width:96.00px;height:1270.00px;background:#2c2c2c;"></div>
<div style="left:3456.00px;top:0.00px;width:30.00px;height:1270.00px;background:#ffffff;"></div>
<div style="left:3360.40px;top:1265.20px;width:126.00px;height:5.00px;background:#ffffff;"></div>
<div style="left:3356.00px;top:1222.00px;width:5.00px;height:48.00px;background:#101010;"></div>
<svg style="left:3385.00px;top:-10.00px;" width="26" height="22" viewBox="0 0 26 22"><circle cx="12.8" cy="12.3" r="6.1" fill="none" stroke="#868686" stroke-width="3"/></svg>
<div style="left:3408.00px;top:-14.00px;width:32.00px;height:32.00px;background:#0078d4;border-radius:16px;"></div>
<span class="s" style="left:3417.9px;top:-11.5px;font-size:22px;font-weight:bold;color:#fff">6</span>
<svg style="left:3380.00px;top:55.00px;" width="56" height="54" viewBox="0 0 56 54"><path d="M5.6 16 Q5.6 13.6 8 13.6 H21.8 Q24.2 13.6 24.2 16 V32.3 H40.5 Q42.9 32.3 42.9 34.7 V47 Q42.9 49.4 40.5 49.4 H8 Q5.6 49.4 5.6 47 Z M5.6 32.3 H24.2 V49.4" fill="none" stroke="#868686" stroke-width="2.7"/><rect x="32.9" y="4.5" width="17.6" height="17.2" rx="3" fill="none" stroke="#868686" stroke-width="2.7"/></svg>
<svg style="left:3386.00px;top:152.00px;" width="46" height="52" viewBox="0 0 46 52"><path d="M2.4 3.5 H31.5" stroke="#868686" stroke-width="1.9" stroke-dasharray="6.6 3.4 8.4 3.4 7.6 20"/><path d="M2.4 48.6 H31.5" stroke="#868686" stroke-width="1.9" stroke-dasharray="6.6 3.4 8.4 3.4 7.6 20"/><path d="M2.4 8.3 H15.8 V15 H10.4 V22.8 H15.3 V29.6 H10.4 V43.2 H2.4 Z" fill="#868686"/><path d="M18.2 43.2 L23.3 8.3 H26.5 L30.5 33 L35.8 8.3 H39 L42 43.2 H38.8 L36.9 17 L31.6 41 H29 L25 17 L21.4 43.2 Z" fill="#7c7c7c" stroke="#7c7c7c" stroke-width="0.7"/></svg>
<svg style="left:3382.00px;top:1052.00px;" width="52" height="52" viewBox="0 0 52 52"><circle cx="26" cy="26" r="22.6" fill="none" stroke="#868686" stroke-width="2.7"/><circle cx="26" cy="21.3" r="9" fill="none" stroke="#868686" stroke-width="2.7"/><path d="M11 43 C13 34.5 20 31.5 26 31.5 C32 31.5 39 34.5 41 43" fill="none" stroke="#868686" stroke-width="2.7"/></svg>
<svg style="left:3382.00px;top:1148.20px;" width="52" height="52" viewBox="0 0 52 52"><path d="M22.31 11.25 L22.90 3.21 L29.10 3.21 L29.69 11.25 L33.82 12.97 L39.93 7.70 L44.30 12.07 L39.03 18.18 L40.75 22.31 L48.79 22.90 L48.79 29.10 L40.75 29.69 L39.03 33.82 L44.30 39.93 L39.93 44.30 L33.82 39.03 L29.69 40.75 L29.10 48.79 L22.90 48.79 L22.31 40.75 L18.18 39.03 L12.07 44.30 L7.70 39.93 L12.97 33.82 L11.25 29.69 L3.21 29.10 L3.21 22.90 L11.25 22.31 L12.97 18.18 L7.70 12.07 L12.07 7.70 L18.18 12.97 Z" fill="none" stroke="#868686" stroke-width="3.1" stroke-linejoin="miter"/><circle cx="26" cy="26" r="5.3" fill="none" stroke="#868686" stroke-width="2.8"/></svg>
<div style="left:3360.40px;top:1255.00px;width:12.00px;height:10.20px;background:#3c4211;"></div>
<div style="left:3360.40px;top:1222.00px;width:67.60px;height:43.20px;background:#16825d;border-radius:0 0 0 13px;"></div>
<div style="left:3428.00px;top:1222.00px;width:58.00px;height:43.20px;background:#0078d4;"></div>
<svg style="left:3380.00px;top:1228.00px;" width="30" height="32" viewBox="0 0 30 32"><path d="M5.6 12.3 L13 19.3 L5.6 26.5 M22 5.5 L14.8 12.6 L22 19.8" fill="none" stroke="#fff" stroke-width="1.7"/></svg>
<svg style="left:3440.00px;top:1229.00px;" width="26" height="30" viewBox="0 0 26 30"><circle cx="7.7" cy="6" r="3.3" fill="none" stroke="#fff" stroke-width="1.8"/><circle cx="7.7" cy="24.5" r="3.3" fill="none" stroke="#fff" stroke-width="1.8"/><circle cx="20.3" cy="10.3" r="3.3" fill="none" stroke="#fff" stroke-width="1.8"/><path d="M7.7 9.3 V21.2 M20.3 13.6 C20.3 18.5 9 16.5 7.8 21" fill="none" stroke="#fff" stroke-width="1.8"/></svg>
<span class="s" style="left:3475px;top:1227.5px;font-size:25.5px;font-weight:bold;color:#fff">m</span>
<svg style="left:0.00px;top:1262.00px;" width="8" height="8" viewBox="0 0 8 8"><path d="M0 2.5 L6.5 8 H0 Z" fill="#6e7886"/></svg>
<svg style="left:3352.00px;top:1262.00px;" width="8" height="8" viewBox="0 0 8 8"><path d="M8 3 V8 H2 Z" fill="#6e7886"/></svg>
</div></body></html>
